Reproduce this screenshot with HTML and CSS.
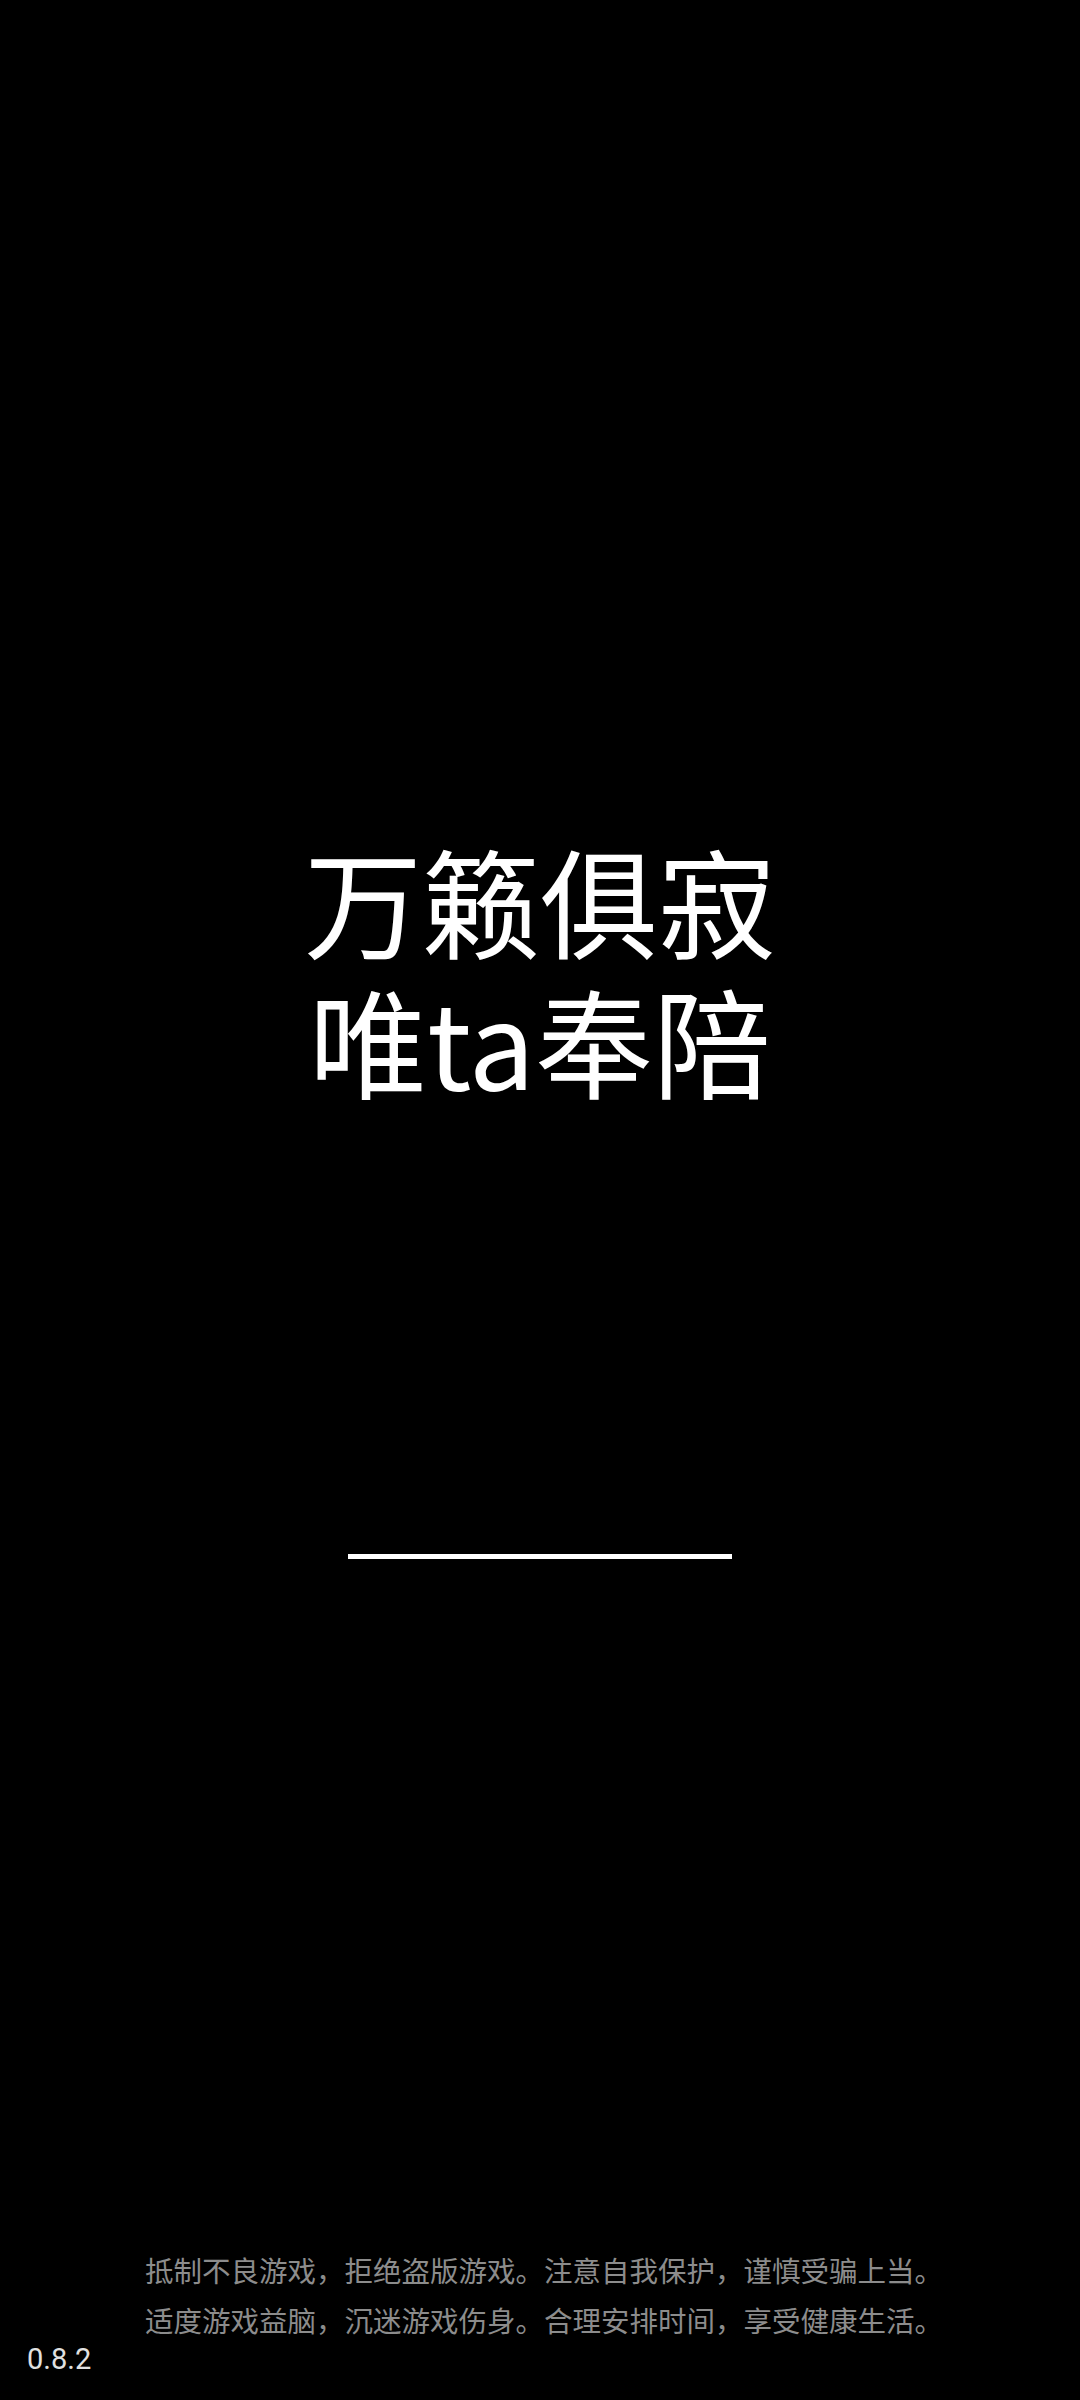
FILE: index.html
```html
<!DOCTYPE html>
<html lang="zh-CN">
<head>
<meta charset="utf-8">
<link rel="stylesheet" href="styles.css">
</head>
<body>
<div class="screen">
  <div class="title">
    <div class="title-line">万籁俱寂</div>
    <div class="title-line">唯ta奉陪</div>
  </div>
  <div class="progress"></div>
  <div class="spacer"></div>
  <div class="notice">
    <div class="notice-line">抵制不良游戏，拒绝盗版游戏。注意自我保护，谨慎受骗上当。</div>
    <div class="notice-line">适度游戏益脑，沉迷游戏伤身。合理安排时间，享受健康生活。</div>
  </div>
  <div class="version">0.8.2</div>
</div>
</body>
</html>
```
FILE: styles.css
```css
html, body {
  margin: 0;
  padding: 0;
  background: #000;
}
.screen {
  width: 1080px;
  height: 2400px;
  display: flex;
  flex-direction: column;
  align-items: center;
  background: #000;
  font-family: "Noto Sans CJK SC", "Noto Sans", sans-serif;
}
.title {
  margin-top: 829px;
  color: #fff;
  font-size: 118px;
  line-height: 140px;
  text-align: center;
}
.title-line {
  white-space: nowrap;
}
.progress {
  margin-top: 445px;
  width: 384px;
  height: 5px;
  background: #fff;
}
.spacer {
  flex: 1;
}
.notice {
  padding-left: 8px;
  color: #8c8c8c;
  font-size: 28.5px;
  line-height: 50px;
  text-align: center;
}
.notice-line {
  white-space: nowrap;
}
.version {
  align-self: flex-start;
  margin-left: 27px;
  margin-bottom: 27px;
  color: #e0e0e0;
  font-family: Roboto, "Noto Sans", sans-serif;
  font-size: 29px;
  line-height: 28px;
}
```
